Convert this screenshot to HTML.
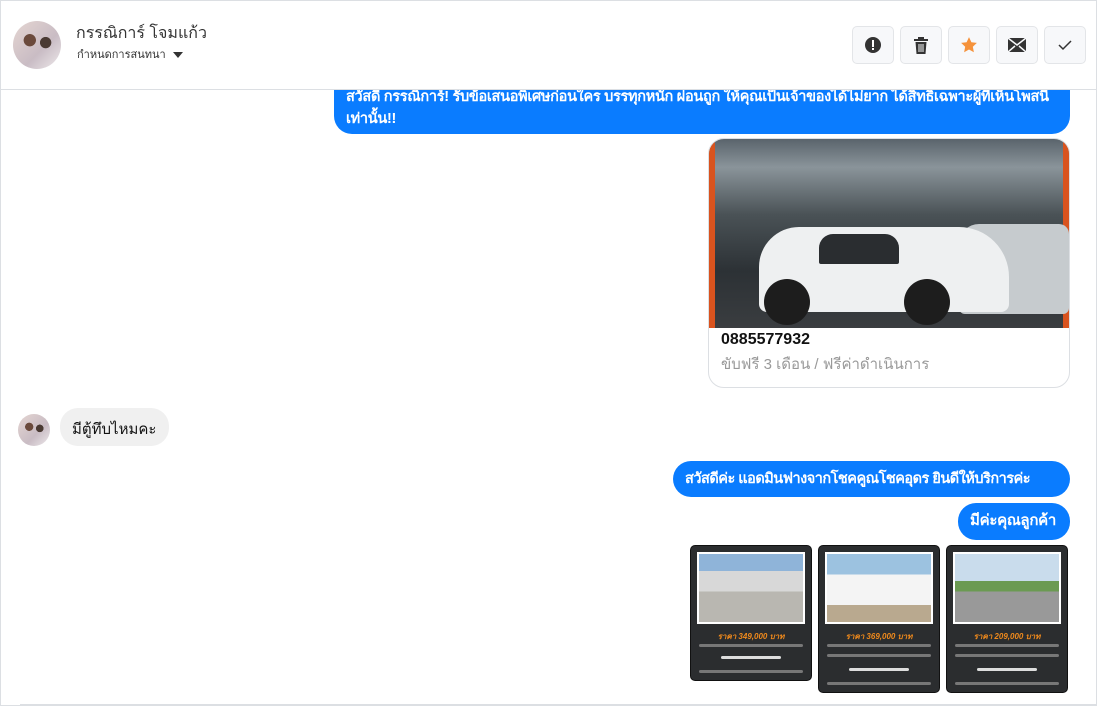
<!DOCTYPE html>
<html><head><meta charset="utf-8"><style>
*{box-sizing:border-box;margin:0;padding:0}
body{width:1097px;height:706px;overflow:hidden;background:#fff;font-family:"Liberation Sans",sans-serif;position:relative}
.frame{position:absolute;left:0;top:0;width:1097px;height:706px;border:1px solid #dcdfe3;pointer-events:none;z-index:5}
.hdr{position:absolute;left:0;top:0;width:1097px;height:90px;border-bottom:1px solid #dcdfe3;background:#fff;z-index:2}
.av{position:absolute;border-radius:50%;background:radial-gradient(circle at 35% 40%,#6b4a3c 0 14%,transparent 15%),radial-gradient(circle at 68% 45%,#4a3a33 0 13%,transparent 14%),linear-gradient(135deg,#e5d6d2,#c9bcc4 60%,#eeeaec)}
.btn{position:absolute;top:26px;width:42px;height:38px;border:1px solid #e3e5e8;border-radius:5px;background:#f7f8fa;display:flex;align-items:center;justify-content:center}
.blue{position:absolute;background:#0a7cff;color:#fff;border-radius:18px;font-size:15px;padding:8px 12px;line-height:22px;white-space:nowrap;font-weight:bold;letter-spacing:-0.3px}
.card{position:absolute;background:#2b2d2f;border-radius:5px;border:1px solid #111}
.card .ph{position:absolute;left:6px;top:6px;right:6px;height:72px;border:2px solid #fff}
.card .pr{position:absolute;left:0;right:0;top:84px;text-align:center;color:#f08a1c;font-size:8px;font-weight:bold;font-style:italic}
.card .ln{position:absolute;left:8px;right:8px;height:3px;background:#777;border-radius:2px}
</style></head><body>
<div class="frame"></div>
<div class="blue" style="left:334px;top:72px;width:736px;height:62px;padding-top:14px;font-size:14.5px;white-space:normal">สวัสดี กรรณิการ์! รับข้อเสนอพิเศษก่อนใคร บรรทุกหนัก ผ่อนถูก ให้คุณเป็นเจ้าของได้ไม่ยาก ได้สิทธิ์เฉพาะผู้ที่เห็นโพสนี้เท่านั้น!!</div>
<div class="hdr">
<div class="av" style="left:13px;top:21px;width:48px;height:48px"></div>
<div style="position:absolute;left:76px;top:21px;font-size:16px;color:#333">กรรณิการ์ โจมแก้ว</div>
<div style="position:absolute;left:77px;top:45px;font-size:11px;color:#333">กำหนดการสนทนา <span style="display:inline-block;border:5px solid transparent;border-top:6px solid #333;border-bottom:0;margin-left:4px;vertical-align:middle"></span></div>
<div class="btn" style="left:852px"><svg width="18" height="18" viewBox="0 0 18 18"><circle cx="9" cy="9" r="8" fill="#333"/><rect x="8" y="4" width="2" height="7" fill="#fff"/><rect x="8" y="12" width="2" height="2" fill="#fff"/></svg></div>
<div class="btn" style="left:900px"><svg width="16" height="17" viewBox="0 0 16 17"><rect x="1" y="2" width="14" height="2" fill="#333"/><rect x="5" y="0" width="6" height="2" fill="#333"/><path d="M2.5 5h11l-1 12h-9z" fill="#333"/><path d="M6 7v8M8 7v8M10 7v8" stroke="#f7f8fa" stroke-width="1"/></svg></div>
<div class="btn" style="left:948px"><svg width="18" height="18" viewBox="0 0 24 24"><path d="M12 1.5l3.2 6.8 7.3.9-5.4 5.1 1.4 7.3L12 18l-6.5 3.6 1.4-7.3L1.5 9.2l7.3-.9z" fill="#f5923b"/></svg></div>
<div class="btn" style="left:996px"><svg width="18" height="14" viewBox="0 0 18 14"><rect width="18" height="14" fill="#333"/><path d="M0 0l9 7 9-7M0 14l7-6M18 14l-7-6" stroke="#f7f8fa" stroke-width="1.5" fill="none"/></svg></div>
<div class="btn" style="left:1044px"><svg width="16" height="12" viewBox="0 0 16 12"><path d="M2 6l4 4 8-8" stroke="#333" stroke-width="1.5" fill="none"/></svg></div>
</div>
<div style="position:absolute;left:708px;top:138px;width:362px;height:250px;border:1px solid #dcdfe3;border-radius:16px;overflow:hidden">
<div style="height:189px;background:linear-gradient(180deg,#5a646c 0%,#8a949a 15%,#4a5256 40%,#2c3135 70%,#3a3d40 100%);position:relative">
<div style="position:absolute;left:0;top:0;width:6px;height:189px;background:#d9531e"></div>
<div style="position:absolute;right:0;top:0;width:6px;height:189px;background:#d9531e"></div>
<div style="position:absolute;left:250px;top:85px;width:110px;height:90px;background:#c6cbce;border-radius:20px 10px 6px 6px"></div>
<div style="position:absolute;left:50px;top:88px;width:250px;height:85px;background:#eef0f1;border-radius:40px 50px 8px 8px"></div>
<div style="position:absolute;left:110px;top:95px;width:80px;height:30px;background:#2a2d30;border-radius:14px 14px 2px 2px"></div>
<div style="position:absolute;left:55px;top:140px;width:46px;height:46px;background:#1d1d1d;border-radius:50%"></div>
<div style="position:absolute;left:195px;top:140px;width:46px;height:46px;background:#1d1d1d;border-radius:50%"></div>
</div>
<div style="padding:2px 12px;font-size:16px;font-weight:bold;color:#111;line-height:20px">0885577932</div>
<div style="padding:0 12px;font-size:15px;color:#999">ขับฟรี 3 เดือน / ฟรีค่าดำเนินการ</div>
</div>
<div class="av" style="left:18px;top:414px;width:32px;height:32px"></div>
<div style="position:absolute;left:60px;top:408px;width:109px;height:38px;background:#f0f0f0;border-radius:18px;font-size:15px;color:#111;padding:9px 12px;white-space:nowrap">มีตู้ทึบไหมคะ</div>
<div class="blue" style="left:673px;top:461px;width:397px;height:36px;padding-top:7px;font-size:14.5px;letter-spacing:-0.5px">สวัสดีค่ะ แอดมินฟางจากโชคคูณโชคอุดร ยินดีให้บริการค่ะ</div>
<div class="blue" style="left:958px;top:503px;width:112px;height:37px;padding-top:7px">มีค่ะคุณลูกค้า</div>
<div class="card" style="left:690px;top:545px;width:122px;height:136px"><div class="ph" style="background:linear-gradient(180deg,#8fb4d9 0 25%,#d8d8d8 25% 55%,#b9b7b1 55%)"></div><div class="pr">ราคา 349,000 บาท</div><div class="ln" style="top:98px"></div><div class="ln" style="top:110px;left:30px;right:30px;background:#ddd"></div><div class="ln" style="top:124px"></div></div>
<div class="card" style="left:818px;top:545px;width:122px;height:148px"><div class="ph" style="background:linear-gradient(180deg,#9cc2e0 0 30%,#f4f4f4 30% 75%,#b9a98f 75%)"></div><div class="pr">ราคา 369,000 บาท</div><div class="ln" style="top:98px"></div><div class="ln" style="top:108px"></div><div class="ln" style="top:122px;left:30px;right:30px;background:#ddd"></div><div class="ln" style="top:136px"></div></div>
<div class="card" style="left:946px;top:545px;width:122px;height:148px"><div class="ph" style="background:linear-gradient(180deg,#c9dcec 0 40%,#6b9a52 40% 55%,#999 55%)"></div><div class="pr">ราคา 209,000 บาท</div><div class="ln" style="top:98px"></div><div class="ln" style="top:108px"></div><div class="ln" style="top:122px;left:30px;right:30px;background:#ddd"></div><div class="ln" style="top:136px"></div></div>
<div style="position:absolute;left:20px;top:704px;width:1077px;height:2px;background:#dcdfe3"></div>
</body></html>
